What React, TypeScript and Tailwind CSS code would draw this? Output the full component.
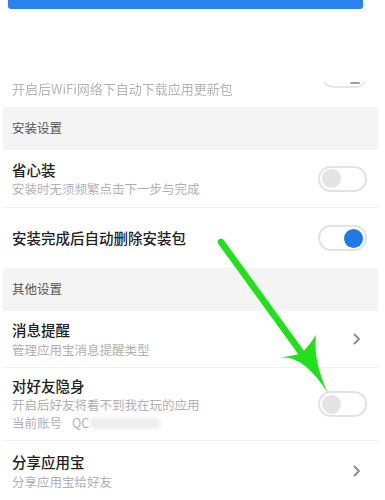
import React from "react";

const font = { fontFamily: '"Noto Sans CJK SC", "Noto Sans", sans-serif' };

function Toggle({ on }: { on?: boolean }) {
  return (
    <div className="w-[49px] h-[26px] rounded-full border-2 border-[#e2e2e2] bg-white flex items-center px-[2px] shrink-0">
      {on ? (
        <div className="ml-auto w-[19px] h-[19px] rounded-full bg-[#1f7ae6]" />
      ) : (
        <div className="w-[19px] h-[19px] rounded-full bg-[#e4e4e4]" />
      )}
    </div>
  );
}

function Chevron() {
  return (
    <svg width="8" height="12" viewBox="0 0 8 12" className="shrink-0 mr-[6px]">
      <path d="M1.5 1.5 L6 6 L1.5 10.5" fill="none" stroke="#8a8a8a" strokeWidth="1.8" strokeLinecap="round" strokeLinejoin="round" />
    </svg>
  );
}

function Section({ title, h }: { title: string; h: string }) {
  return (
    <div className={`bg-[#f4f4f4] flex items-center pl-[9px] ${h}`}>
      <span className="text-[12.5px] text-[#555]">{title}</span>
    </div>
  );
}

export default function App() {
  return (
    <div className="relative w-[385px] h-[500px] bg-white overflow-hidden" style={font}>
      <div className="ml-[3px] w-[375px]">
        <div className="h-[107px] relative">
          <div className="ml-[5px] w-[355px] h-[9px] bg-[#2a82ec] rounded-b-[3px]" />
          <div className="absolute left-[9px] top-[80px] text-[13px] text-[#b4b4b4] leading-[18px] blur-[0.5px]">
            开启后WiFi网络下自动下载应用更新包
          </div>
          <svg className="absolute left-[318px] top-[76px]" width="46" height="14" viewBox="0 0 46 14">
            <path d="M3 6 Q6 11 14 11 L36 11 Q42 10 44 6" fill="none" stroke="#e0e0e0" strokeWidth="1.5" />
            <path d="M30 7 L38 7" stroke="#90a4c0" strokeWidth="2" strokeLinecap="round" />
          </svg>
        </div>
        <Section title="安装设置" h="h-[43px]" />
        <div className="h-[58px] flex items-center pl-[9px] pr-[11px] border-b border-[#f0f0f0]">
          <div className="flex-1">
            <div className="text-[14.5px] font-medium text-[#222] leading-[20px]">省心装</div>
            <div className="text-[12.5px] text-[#b0b0b0] leading-[18px]">安装时无须频繁点击下一步与完成</div>
          </div>
          <Toggle />
        </div>
        <div className="h-[60px] flex items-center pl-[9px] pr-[11px]">
          <div className="flex-1 text-[14.5px] font-medium text-[#222]">安装完成后自动删除安装包</div>
          <Toggle on />
        </div>
        <Section title="其他设置" h="h-[43px]" />
        <div className="h-[57px] flex items-center pl-[9px] pr-[11px] border-b border-[#f0f0f0]">
          <div className="flex-1">
            <div className="text-[14.5px] font-medium text-[#222] leading-[22px]">消息提醒</div>
            <div className="text-[12.5px] text-[#b0b0b0] leading-[18px]">管理应用宝消息提醒类型</div>
          </div>
          <Chevron />
        </div>
        <div className="h-[73px] flex items-center pl-[9px] pr-[11px] border-b border-[#f0f0f0]">
          <div className="flex-1">
            <div className="text-[14.5px] font-medium text-[#222] leading-[20px]">对好友隐身</div>
            <div className="text-[12.5px] text-[#b0b0b0] leading-[18px]">开启后好友将看不到我在玩的应用</div>
            <div className="text-[12.5px] text-[#b0b0b0] leading-[18px] flex items-center">
              <span>当前账号</span>
              <span className="ml-[10px]">QC</span>
              <span className="ml-[1px] w-[70px] h-[11px] bg-[#ececec] rounded-sm blur-[2px]" />
            </div>
          </div>
          <Toggle />
        </div>
        <div className="h-[59px] flex items-center pl-[9px] pr-[11px]">
          <div className="flex-1">
            <div className="text-[14.5px] font-medium text-[#222] leading-[22px]">分享应用宝</div>
            <div className="text-[12.5px] text-[#b0b0b0] leading-[18px]">分享应用宝给好友</div>
          </div>
          <Chevron />
        </div>
      </div>
      <svg className="absolute left-0 top-0 pointer-events-none" width="385" height="500" viewBox="0 0 385 500">
        <line x1="221" y1="242" x2="308" y2="362" stroke="#22e01c" strokeWidth="6.5" strokeLinecap="round" />
        <path d="M279 358 Q302 353 328 393 Q313 362 316 335 Q306 350 300 354 Q290 356 279 358 Z" fill="#22e01c" />
      </svg>
    </div>
  );
}
